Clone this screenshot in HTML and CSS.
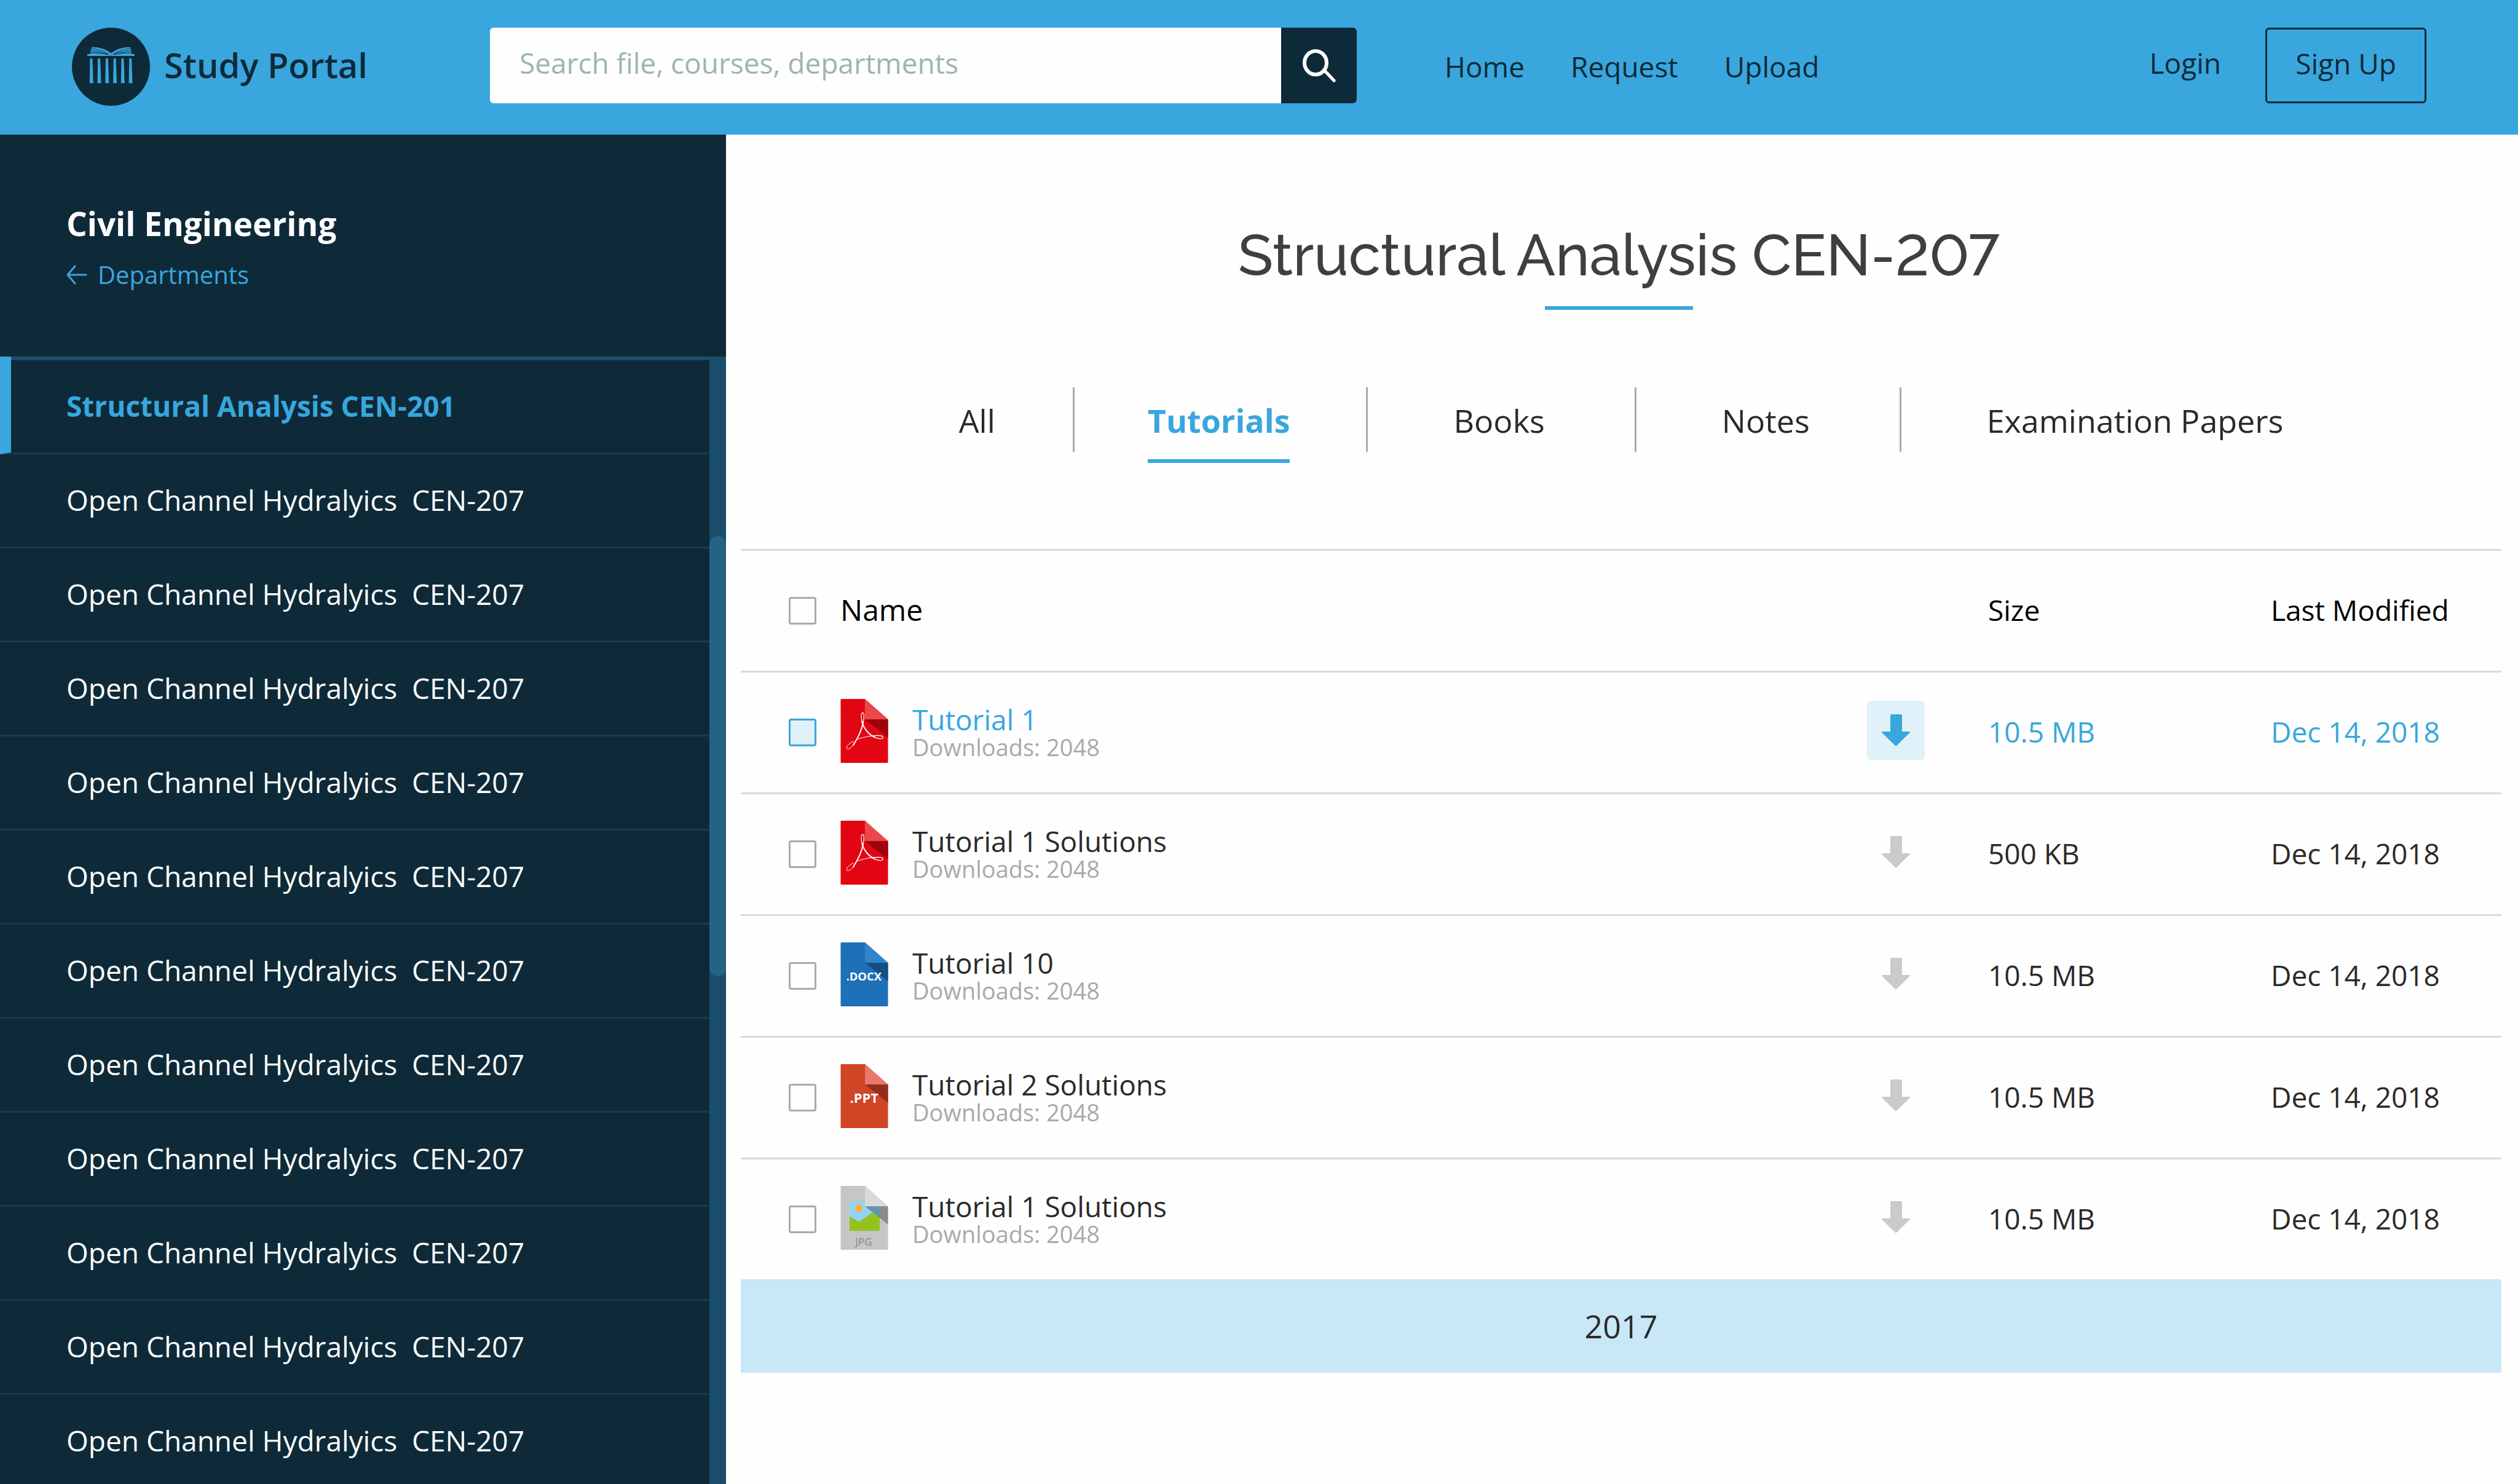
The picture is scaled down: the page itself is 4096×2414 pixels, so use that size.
FILE: index.html
```html
<!DOCTYPE html>
<html lang="en">
<head>
<meta charset="utf-8">
<meta name="viewport" content="width=device-width, initial-scale=1">
<title>Study Portal - Structural Analysis CEN-207</title>
<link rel="stylesheet" href="styles.css">
</head>
<body>
<svg class="defs" aria-hidden="true">
  <symbol id="icon-arrow-down" viewBox="0 0 46 52">
    <path d="M14 1.500Q14 0 15.500 0H31.500Q33 0 33 1.500V28H45Q46.500 28 45.500 30L23 52L.5 30Q-.5 28 1 28H14Z" fill="currentColor"/>
  </symbol>
  <symbol id="icon-pdf" viewBox="78 48 309 417">
    <path d="M84 48H236L387 181V459Q387 465 381 465H84Q78 465 78 459V54Q78 48 84 48Z" fill="#e20613"/>
    <path d="M236 48L387 181H236Z" fill="#ea484b"/>
    <path d="M236 181H387V300Z" fill="#9d030d"/>
    <g fill="none" stroke="#fff" stroke-linecap="round">
      <path stroke-width="4" d="M160 325C130 337 112 362 118 371C124 379 142 373 160 349"/>
      <path stroke-width="8" d="M160 349C190 305 216 245 225 200"/>
      <path stroke-width="5" d="M225 200C232 165 232 138 222 138C211 138 210 165 217 195"/>
      <path stroke-width="8" d="M217 195C225 235 258 278 300 298"/>
      <path stroke-width="5" d="M300 298C330 312 356 310 354 297C352 286 315 285 280 289"/>
      <path stroke-width="4" d="M280 289C245 293 215 301 188 311"/>
    </g>
  </symbol>
  <symbol id="icon-docx" viewBox="0 0 309 417">
    <path d="M6 0H159L309 133V411Q309 417 303 417H6Q0 417 0 411V6Q0 0 6 0Z" fill="#1e70b8"/>
    <path d="M159 0L309 133H159Z" fill="#3185c8"/>
    <path d="M159 133H309V252Z" fill="#164e80"/>
    <text class="file-tag" x="36" y="249" font-size="74">.DOCX</text>
  </symbol>
  <symbol id="icon-ppt" viewBox="0 0 309 417">
    <path d="M6 0H159L309 133V411Q309 417 303 417H6Q0 417 0 411V6Q0 0 6 0Z" fill="#d04526"/>
    <path d="M159 0L309 133H159Z" fill="#e8786c"/>
    <path d="M159 133H309V252Z" fill="#912f1a"/>
    <text class="file-tag" x="60" y="251" font-size="88">.PPT</text>
  </symbol>
  <symbol id="icon-jpg" viewBox="0 0 309 417">
    <path d="M6 0H159L309 133V411Q309 417 303 417H6Q0 417 0 411V6Q0 0 6 0Z" fill="#c6c6c5"/>
    <path d="M58 101H255V294H58Z" fill="#92d4f6"/>
    <path d="M58 199L122 234L206 173L255 204V294H58Z" fill="#95c11f"/>
    <circle cx="119" cy="147" r="25" fill="#fab133"/>
    <path d="M159 0L309 133H159Z" fill="#dadada"/>
    <path d="M159 133H309V252Z" fill="#000" opacity=".3"/>
    <text class="file-tag file-tag--light" x="96" y="387" font-size="68">JPG</text>
  </symbol>
</svg>

<header class="topbar">
  <a class="brand" href="#">
    <svg class="brand__mark" viewBox="47 59 508 508" aria-hidden="true">
      <circle cx="301" cy="313" r="254" fill="#0e2a38"/>
      <g fill="#39a6de">
        <path d="M175 187C225 183 270 202 302 225C334 202 378 183 427 187L438 231H455V243H147V231H164Z"/>
        <path d="M165 259H180L186 420H162Z"/>
        <path d="M216 259H231L237 420H213Z"/>
        <path d="M267 259H282L288 420H264Z"/>
        <path d="M318 259H333L339 420H315Z"/>
        <path d="M369 259H384L390 420H366Z"/>
        <path d="M420 259H435L441 420H417Z"/>
      </g>
      <g fill="none" stroke="#0e2a38" stroke-width="3">
        <path d="M172 195C215 196 255 212 286 231M170 208C215 207 255 220 286 233M167 220C210 216 255 226 286 235M164 223C205 222 255 228 284 235"/>
        <path d="M430 195C388 196 348 212 316 231M432 208C388 207 348 220 316 233M435 220C392 216 348 226 316 235M438 223C398 222 348 228 318 235M301 236V243"/>
      </g>
    </svg>
    <span class="brand__name">Study Portal</span>
  </a>
  <form class="search" role="search">
    <input class="search__input" type="text" aria-label="Search" placeholder="Search file, courses, departments">
    <button class="search__button" type="button" aria-label="Search">
      <svg class="search__icon" viewBox="0 0 72 72" fill="none" stroke="#fefefe" aria-hidden="true">
        <ellipse cx="28" cy="29.500" rx="24" ry="25.500" stroke-width="8"/>
        <path d="M47 46L68 68" stroke-width="7" stroke-linecap="round"/>
      </svg>
    </button>
  </form>
  <nav class="menu" aria-label="Main">
    <a href="#">Home</a>
    <a href="#">Request</a>
    <a href="#">Upload</a>
  </nav>
  <div class="account">
    <a class="account__login" href="#">Login</a>
    <button class="account__signup" type="button">Sign Up</button>
  </div>
</header>

<div class="layout">
  <aside class="sidebar">
    <div class="sidebar__head">
      <h2 class="sidebar__title">Civil Engineering</h2>
      <a class="sidebar__back" href="#">
        <svg class="sidebar__arrow" viewBox="0 0 34 32" fill="none" stroke="currentColor" stroke-width="3" stroke-linecap="round" stroke-linejoin="round" aria-hidden="true"><path d="M14 2L2 16L14 30M2 16H32"/></svg>
        Departments
      </a>
    </div>
    <div class="sidebar__body">
      <ul class="courses">
        <li><a class="course course--active" href="#">Structural Analysis CEN-201</a></li>
        <li><a class="course" href="#">Open Channel Hydralyics&nbsp; CEN-207</a></li>
        <li><a class="course" href="#">Open Channel Hydralyics&nbsp; CEN-207</a></li>
        <li><a class="course" href="#">Open Channel Hydralyics&nbsp; CEN-207</a></li>
        <li><a class="course" href="#">Open Channel Hydralyics&nbsp; CEN-207</a></li>
        <li><a class="course" href="#">Open Channel Hydralyics&nbsp; CEN-207</a></li>
        <li><a class="course" href="#">Open Channel Hydralyics&nbsp; CEN-207</a></li>
        <li><a class="course" href="#">Open Channel Hydralyics&nbsp; CEN-207</a></li>
        <li><a class="course" href="#">Open Channel Hydralyics&nbsp; CEN-207</a></li>
        <li><a class="course" href="#">Open Channel Hydralyics&nbsp; CEN-207</a></li>
        <li><a class="course" href="#">Open Channel Hydralyics&nbsp; CEN-207</a></li>
        <li><a class="course" href="#">Open Channel Hydralyics&nbsp; CEN-207</a></li>
      </ul>
      <div class="scrollbar"><div class="scrollbar__thumb"></div></div>
    </div>
  </aside>

  <main class="content">
    <h1 class="title">Structural Analysis CEN-207</h1>
    <ul class="tabs">
      <li class="tabs__item"><a class="tab" href="#">All</a></li>
      <li class="tabs__item tabs__item--active"><a class="tab" href="#" aria-current="page">Tutorials</a></li>
      <li class="tabs__item"><a class="tab" href="#">Books</a></li>
      <li class="tabs__item"><a class="tab" href="#">Notes</a></li>
      <li class="tabs__item"><a class="tab" href="#">Examination Papers</a></li>
    </ul>
    <table class="files">
      <colgroup>
        <col class="col-check">
        <col>
        <col class="col-download">
        <col class="col-size">
        <col class="col-date">
      </colgroup>
      <thead>
        <tr>
          <th class="files__check"><input class="check" type="checkbox" aria-label="Select all"></th>
          <th class="files__head-name">Name</th>
          <td></td>
          <th class="files__text">Size</th>
          <th class="files__text">Last Modified</th>
        </tr>
      </thead>
      <tbody>
        <tr class="files__current">
          <td class="files__check"><input class="check" type="checkbox" aria-label="Select Tutorial 1"></td>
          <td><div class="file"><svg class="file__icon" aria-hidden="true"><use href="#icon-pdf"/></svg><div><a class="file__name" href="#">Tutorial 1</a><span class="file__meta">Downloads: 2048</span></div></div></td>
          <td class="files__download"><button class="download" type="button" aria-label="Download"><svg class="download__icon"><use href="#icon-arrow-down"/></svg></button></td>
          <td class="files__text">10.5 MB</td>
          <td class="files__text">Dec 14, 2018</td>
        </tr>
        <tr>
          <td class="files__check"><input class="check" type="checkbox" aria-label="Select Tutorial 1 Solutions"></td>
          <td><div class="file"><svg class="file__icon" aria-hidden="true"><use href="#icon-pdf"/></svg><div><a class="file__name" href="#">Tutorial 1 Solutions</a><span class="file__meta">Downloads: 2048</span></div></div></td>
          <td class="files__download"><button class="download" type="button" aria-label="Download"><svg class="download__icon"><use href="#icon-arrow-down"/></svg></button></td>
          <td class="files__text">500 KB</td>
          <td class="files__text">Dec 14, 2018</td>
        </tr>
        <tr>
          <td class="files__check"><input class="check" type="checkbox" aria-label="Select Tutorial 10"></td>
          <td><div class="file"><svg class="file__icon" aria-hidden="true"><use href="#icon-docx"/></svg><div><a class="file__name" href="#">Tutorial 10</a><span class="file__meta">Downloads: 2048</span></div></div></td>
          <td class="files__download"><button class="download" type="button" aria-label="Download"><svg class="download__icon"><use href="#icon-arrow-down"/></svg></button></td>
          <td class="files__text">10.5 MB</td>
          <td class="files__text">Dec 14, 2018</td>
        </tr>
        <tr>
          <td class="files__check"><input class="check" type="checkbox" aria-label="Select Tutorial 2 Solutions"></td>
          <td><div class="file"><svg class="file__icon" aria-hidden="true"><use href="#icon-ppt"/></svg><div><a class="file__name" href="#">Tutorial 2 Solutions</a><span class="file__meta">Downloads: 2048</span></div></div></td>
          <td class="files__download"><button class="download" type="button" aria-label="Download"><svg class="download__icon"><use href="#icon-arrow-down"/></svg></button></td>
          <td class="files__text">10.5 MB</td>
          <td class="files__text">Dec 14, 2018</td>
        </tr>
        <tr>
          <td class="files__check"><input class="check" type="checkbox" aria-label="Select Tutorial 1 Solutions image"></td>
          <td><div class="file"><svg class="file__icon" aria-hidden="true"><use href="#icon-jpg"/></svg><div><a class="file__name" href="#">Tutorial 1 Solutions</a><span class="file__meta">Downloads: 2048</span></div></div></td>
          <td class="files__download"><button class="download" type="button" aria-label="Download"><svg class="download__icon"><use href="#icon-arrow-down"/></svg></button></td>
          <td class="files__text">10.5 MB</td>
          <td class="files__text">Dec 14, 2018</td>
        </tr>
      </tbody>
      <tbody>
        <tr class="files__year"><th colspan="5">2017</th></tr>
      </tbody>
    </table>
  </main>
</div>
</body>
</html>
```

FILE: styles.css
```css
:root {
  --blue: #39a6de;
  --navy: #0e2a38;
  --ink: #2b2a29;
  --grey: #a9a9a9;
  --line: #d9d9d9;
  --tint: #e1f1fa;
  --white: #fefefe;
}

*,
*::before,
*::after {
  box-sizing: border-box;
}

body {
  display: flex;
  flex-direction: column;
  height: 100vh;
  margin: 0;
  overflow: hidden;
  background: var(--white);
  color: var(--ink);
  font: 400 46px/60px "Open Sans", "Noto Sans", sans-serif;
}

a {
  color: inherit;
  text-decoration: none;
}

button,
input {
  margin: 0;
  padding: 0;
  border: 0;
  background: none;
  color: inherit;
  font: inherit;
}

ul {
  margin: 0;
  padding: 0;
  list-style: none;
}

.defs {
  display: none;
}

.file-tag {
  fill: #fff;
  font-family: "Open Sans", "Noto Sans", sans-serif;
  font-weight: 700;
}

.file-tag--light {
  fill: #858585;
  font-weight: 400;
}

/* Top bar */

.topbar {
  display: flex;
  flex: none;
  align-items: flex-start;
  min-height: 219px;
  padding: 45px 149px 0 117px;
  background: var(--blue);
  color: var(--navy);
}

.brand {
  display: flex;
  flex: 0 0 680px;
  gap: 23px;
}

.brand__mark {
  width: 127px;
  height: 127px;
}

.brand__name {
  font-size: 56px;
  font-weight: 600;
  line-height: 120px;
}

.search {
  display: flex;
  flex: 0 1 1410px;
  height: 123px;
  border-radius: 6px;
  background: var(--white);
  overflow: hidden;
}

.search__input {
  flex: 1;
  min-width: 0;
  padding: 0 24px 10px 48px;
  outline: 0;
}

.search__input::placeholder {
  color: #9db5b2;
  opacity: 1;
}

.search__button {
  display: flex;
  flex: none;
  align-items: center;
  justify-content: center;
  width: 123px;
  background: var(--navy);
}

.search__icon {
  width: 54px;
  height: 54px;
}

.menu {
  display: flex;
  gap: 75px;
  margin-left: 143px;
  line-height: 126px;
}

.account {
  display: flex;
  gap: 72px;
  margin-left: auto;
  line-height: 114px;
}

.account__signup {
  width: 262px;
  height: 123px;
  padding-bottom: 8px;
  border: 3px solid var(--navy);
  border-radius: 6px;
  line-height: 60px;
}

/* Sidebar */

.layout {
  display: flex;
  flex: 1;
  min-height: 0;
}

.sidebar {
  display: flex;
  flex: 0 0 1181px;
  flex-direction: column;
  background: var(--navy);
  color: var(--white);
}

.sidebar__head {
  flex: none;
  height: 361px;
  padding: 110px 48px 0 108px;
}

.sidebar__title {
  margin: 0 0 16px;
  font-size: 53px;
  font-weight: 700;
  line-height: 70px;
}

.sidebar__back {
  display: inline-flex;
  align-items: center;
  gap: 17px;
  color: var(--blue);
  font-size: 40px;
  line-height: 62px;
}

.sidebar__arrow {
  width: 34px;
  height: 32px;
}

.sidebar__body {
  display: flex;
  flex: 1;
  min-height: 0;
  border-top: 6px solid #1b4e6a;
}

.courses {
  flex: 1;
}

.course {
  display: block;
  height: 153px;
  padding: 0 48px 0 108px;
  border-bottom: 3px solid #153d51;
  line-height: 148px;
}

.course--active {
  height: 159px;
  margin-top: -6px;
  padding: 6px 48px 0 90px;
  border-left: 18px solid var(--blue);
  color: var(--blue);
  font-weight: 700;
}

.scrollbar {
  flex: 0 0 27px;
  padding-top: 286px;
  background: #1b4e6a;
}

.scrollbar__thumb {
  height: 716px;
  border-radius: 14px;
  background: #246385;
}

/* Content */

.content {
  flex: 1;
  min-width: 0;
  padding: 131px 27px 0 24px;
}

.title {
  display: flex;
  flex-direction: column;
  align-items: center;
  margin: 0 0 126px;
  padding-right: 8px;
  color: #403f3d;
  font-family: Raleway, "Open Sans", sans-serif;
  font-size: 94px;
  font-variant-numeric: lining-nums;
  font-weight: 500;
  line-height: 130px;
}

.title::after {
  content: "";
  width: 241px;
  height: 6px;
  margin-top: 18px;
  background: var(--blue);
}

.tabs {
  display: flex;
  justify-content: center;
  height: 105px;
  margin-bottom: 158px;
  font-size: 52px;
}

.tabs__item {
  padding: 0 146px 0 139px;
}

.tabs__item + .tabs__item {
  border-left: 3px solid var(--grey);
}

.tabs__item:first-child {
  padding: 0 126px 0 0;
}

.tabs__item:last-child {
  padding-right: 0;
}

.tabs__item--active {
  padding: 0 124px 0 119px;
  color: var(--blue);
  font-weight: 700;
}

.tab {
  display: block;
  padding: 18px 0 27px;
  line-height: 72px;
}

.tabs__item--active .tab {
  border-bottom: 6px solid var(--blue);
}

.files {
  width: 100%;
  border-collapse: collapse;
  table-layout: fixed;
}

.col-check {
  width: 162px;
}

.col-download {
  width: 197px;
}

.col-size {
  width: 460px;
}

.col-date {
  width: 375px;
}

.files tr {
  height: 198px;
}

.files th,
.files td {
  padding: 3px 0 0;
  background: linear-gradient(var(--line), var(--line)) top / 100% 3px no-repeat;
  font-weight: 400;
  text-align: left;
  vertical-align: middle;
}

.files thead {
  color: #000;
}

.files .files__head-name {
  padding-bottom: 4px;
  font-size: 48px;
}

.files .files__check {
  padding-left: 78px;
}

.files .files__text {
  padding-bottom: 4px;
}

.files .files__download {
  padding-bottom: 8px;
}

.files .files__current {
  color: var(--blue);
}

.check {
  display: block;
  width: 45px;
  height: 45px;
  border: 3px solid var(--grey);
  border-radius: 4px;
  appearance: none;
}

.files__current .check {
  border-color: var(--blue);
  background: var(--tint);
}

.file {
  display: flex;
  align-items: center;
  gap: 39px;
}

.file__icon {
  flex: none;
  width: 78px;
  height: 104px;
  margin-bottom: 6px;
}

.file__name,
.file__meta {
  display: block;
}

.file__name {
  line-height: 46px;
}

.file__meta {
  color: var(--grey);
  font-size: 38px;
  line-height: 44px;
}

.download {
  display: flex;
  align-items: center;
  justify-content: center;
  width: 94px;
  height: 96px;
  border-radius: 6px;
  color: #cacac9;
}

.files__current .download {
  background: var(--tint);
  color: var(--blue);
}

.download__icon {
  width: 46px;
  height: 52px;
}

.files .files__year {
  height: 152px;
}

.files .files__year th {
  padding: 0;
  background: #c8e7f7;
  font-size: 52px;
  text-align: center;
}
```
